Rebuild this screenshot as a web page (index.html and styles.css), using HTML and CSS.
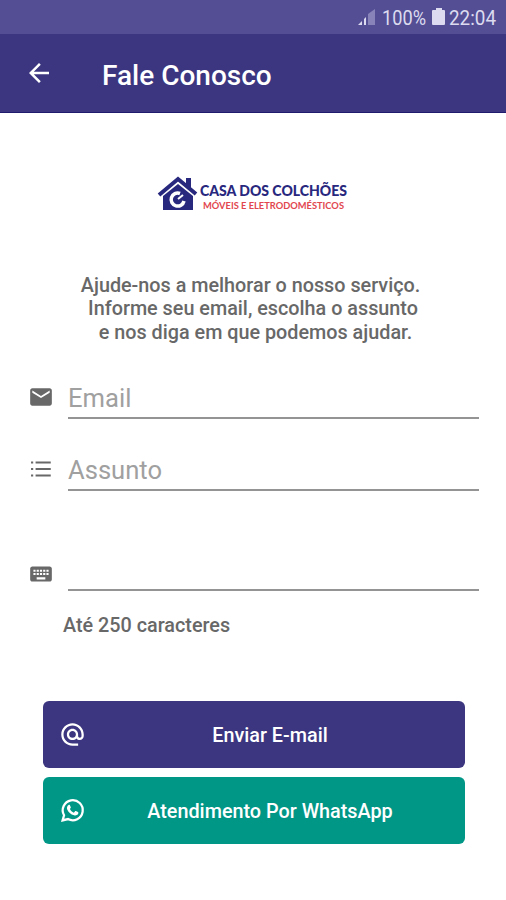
FILE: index.html
```html
<!DOCTYPE html>
<html lang="pt-BR">
<head>
  <meta charset="UTF-8" />
  <meta name="viewport" content="width=device-width, initial-scale=1.0" />
  <title>Fale Conosco</title>
  <link rel="stylesheet" href="styles.css">
</head>
<body>

  <div class="status-bar">
    <svg width="152" height="34" viewBox="0 0 152 34">
      <path d="M4 25l4-4v4zM10 25v-6l2-2v8z" fill="#dcdbef" />
      <path d="M14 25V14l7-5v16z" fill="#8884b9" />
      <text x="28" y="25" textLength="44" lengthAdjust="spacingAndGlyphs">100%</text>
      <path d="M80 10h2V8h6v2h2q1 0 1 1v13q0 1-1 1H79q-1 0-1-1V11q0-1 1-1z" fill="#dcdbef" />
      <text x="95" y="25" textLength="47" lengthAdjust="spacingAndGlyphs">22:04</text>
    </svg>
  </div>

  <header class="app-bar">
    <svg class="back" viewBox="0 0 24 24"><path d="M20 11H7.83l5.59-5.59L12 4l-8 8 8 8 1.41-1.41L7.83 13H20v-2z" /></svg>
    <h1>Fale Conosco</h1>
  </header>

  <main>
    <svg class="logo" width="200" height="44" viewBox="0 0 200 44">
      <path d="M2 20L21 4l18 15" fill="none" stroke="#28287e" stroke-width="4" />
      <path d="M29 3h5v11l-5-4z" fill="#28287e" />
      <path d="M21 9l15 12v14H6V21z" fill="#28287e" />
      <path d="M23 18.500a6.500 6.500 0 1 0 4 7.500" fill="none" stroke="#fff" stroke-width="3.500" />
      <path d="M21 24l5-4" stroke="#fff" stroke-width="2" />
      <text class="logo-name" x="43" y="20.5" textLength="147" lengthAdjust="spacingAndGlyphs">CASA DOS COLCHÕES</text>
      <text class="logo-sub" x="46" y="33.5" textLength="141" lengthAdjust="spacingAndGlyphs">MÓVEIS E ELETRODOMÉSTICOS</text>
    </svg>

    <p class="intro">Ajude-nos a melhorar o nosso serviço.&nbsp;
Informe seu email, escolha o assunto
&nbsp;e nos diga em que podemos ajudar.</p>

    <form>
      <div class="field">
        <svg viewBox="0 0 24 24"><path d="M20 4H4c-1.1 0-1.99.9-1.99 2L2 18c0 1.1.9 2 2 2h16c1.1 0 2-.9 2-2V6c0-1.1-.9-2-2-2zm0 4l-8 5-8-5V6l8 5 8-5v2z" /></svg>
        <input type="email" placeholder="Email">
      </div>
      <div class="field">
        <svg viewBox="0 0 24 24"><path d="M2.8 5h2v2h-2zM2.8 11h2v2h-2zM2.8 17h2v2h-2zM7 5.1h14v1.8H7zM7 11.1h14v1.8H7zM7 17.1h14v1.8H7z" /></svg>
        <input type="text" placeholder="Assunto">
      </div>
      <div class="field message">
        <svg viewBox="0 0 24 24"><path d="M20 5H4c-1.1 0-1.99.9-1.99 2L2 17c0 1.1.9 2 2 2h16c1.1 0 2-.9 2-2V7c0-1.1-.9-2-2-2zm-9 3h2v2h-2V8zm0 3h2v2h-2v-2zM8 8h2v2H8V8zm0 3h2v2H8v-2zm-1 2H5v-2h2v2zm0-3H5V8h2v2zm9 7H8v-2h8v2zm0-4h-2v-2h2v2zm0-3h-2V8h2v2zm3 3h-2v-2h2v2zm0-3h-2V8h2v2z" /></svg>
        <input type="text" maxlength="250">
      </div>
      <p class="hint">Até 250 caracteres</p>

      <button type="button" class="btn email">
        <svg viewBox="0 0 24 24"><path d="M12 1.95c-5.52 0-10 4.48-10 10s4.48 10 10 10h5v-2h-5c-4.34 0-8-3.66-8-8s3.66-8 8-8 8 3.66 8 8v1.43c0 .79-.71 1.57-1.5 1.57s-1.5-.78-1.5-1.57v-1.43c0-2.76-2.24-5-5-5s-5 2.24-5 5 2.24 5 5 5c1.38 0 2.64-.56 3.54-1.47.65.89 1.77 1.47 2.96 1.47 1.97 0 3.5-1.6 3.5-3.57v-1.43c0-5.52-4.48-10-10-10zm0 13c-1.66 0-3-1.34-3-3s1.34-3 3-3 3 1.34 3 3-1.34 3-3 3z" /></svg>
        <span>Enviar E-mail</span>
      </button>
      <button type="button" class="btn whatsapp">
        <svg viewBox="0 0 24 24">
          <path d="M3.2 20.8l1.3-4.6A8.9 8.9 0 1 1 8 19.6z" fill="none" stroke="#fff" stroke-width="2" />
          <path d="M8.5 7.2c.4-.4 1-.3 1.2.1l.8 1.9c.1.3 0 .6-.8 1.5.8 1.5 1.9 2.5 3.5 3.2l1.1-1.3c.2-.2.4-.2.7-.1l1.9.9c.5.3.3 1.4-.1 2-.7.9-2.1 1.3-3.4.9-3.1-.9-5-2.7-6.1-5.2-.6-1.5 0-3.1 1.2-3.9z" />
        </svg>
        <span>Atendimento Por WhatsApp</span>
      </button>
    </form>
  </main>

</body>
</html>
```

FILE: styles.css
```css
* {
  box-sizing: border-box;
}
body {
  margin: 0;
  background-color: #fff;
  color: #686868;
  font-family: Roboto, sans-serif;
}
.status-bar {
  display: flex;
  justify-content: flex-end;
  height: 34px;
  background-color: #544f95;
}
.status-bar text {
  fill: #dcdbef;
  font-size: 20px;
}
.app-bar {
  display: flex;
  align-items: center;
  height: 79px;
  padding-left: 24px;
  background-color: #3b367f;
  border-bottom: 1px solid #211b6d;
  color: #fff;
}
.back {
  width: 30px;
  height: 30px;
  fill: #fff;
}
.app-bar h1 {
  margin: 5px 0 0 48px;
  font-size: 28px;
  font-weight: 500;
}
.logo {
  display: block;
  margin: 62px 0 0 157px;
  overflow: visible;
}
.logo-name {
  fill: #28287e;
  font-family: Lato, sans-serif;
  font-size: 15.5px;
  font-weight: 900;
}
.logo-sub {
  fill: #e2474f;
  font-family: Lato, sans-serif;
  font-size: 9.3px;
  font-weight: 700;
}
.intro {
  margin: 55px 0 0;
  font-size: 19.8px;
  font-weight: 500;
  line-height: 23.3px;
  text-align: center;
  white-space: pre;
}
form {
  padding: 31px 27px 0 28px;
}
.field {
  display: flex;
  align-items: center;
  height: 44px;
  margin-bottom: 28px;
}
.field svg {
  width: 26px;
  height: 26px;
  margin-right: 14px;
  fill: #686868;
}
.field input {
  flex: 1;
  min-width: 0;
  height: 44px;
  padding: 5px 0 0;
  border: 0;
  border-bottom: 2px solid #949494;
  background: none;
  font: 25.6px Roboto, sans-serif;
  outline: none;
}
.field input::placeholder {
  color: #a0a0a0;
}
.message {
  margin: 56px 0 0;
}
.message svg {
  margin-top: 11px;
}
.hint {
  margin: 23px 0 0 35px;
  font-size: 19.8px;
  font-weight: 500;
  line-height: 24px;
}
.btn {
  display: flex;
  align-items: center;
  width: 422px;
  height: 67px;
  margin: 0 0 9px 15px;
  padding: 0 16px;
  border: 0;
  border-radius: 6px;
  color: #fff;
  font: 500 19.8px Roboto, sans-serif;
}
.btn svg {
  width: 27px;
  height: 27px;
  fill: #fff;
}
.btn span {
  flex: 1;
  padding: 2px 0 0 5px;
}
.email {
  margin-top: 63px;
  background-color: #3b367f;
}
.whatsapp {
  background-color: #019787;
}
```
